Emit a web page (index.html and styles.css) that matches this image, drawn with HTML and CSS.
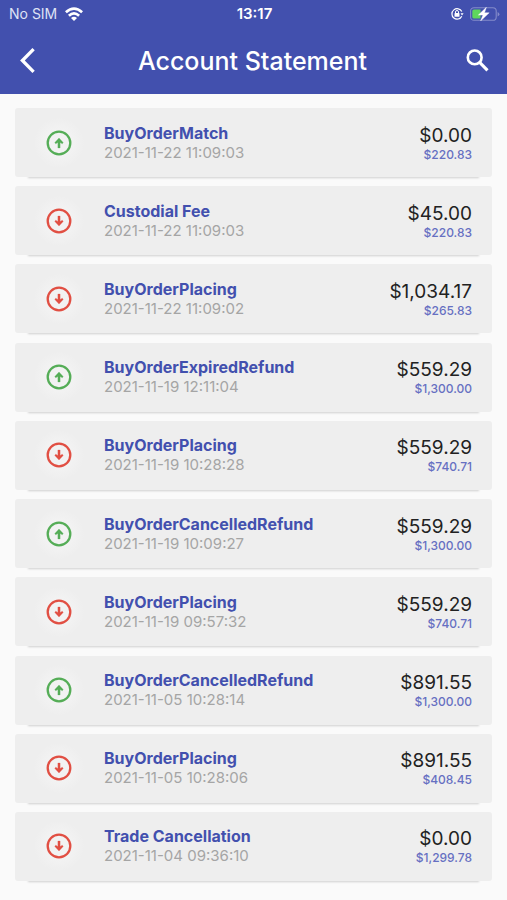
FILE: index.html
```html
<!DOCTYPE html>
<html lang="en">
<head>
<meta charset="utf-8">
<meta name="viewport" content="width=device-width, initial-scale=1">
<title>Account Statement</title>
<link rel="stylesheet" href="styles.css">
</head>
<body>
<svg class="sprite" aria-hidden="true">
  <symbol id="up" viewBox="0 0 26 26"><circle cx="13" cy="13" r="11.3" fill="none" stroke="currentColor" stroke-width="2.3"/><path d="M11.9 17.9v-5.4l-2.2 1.3-.9-1.2L13 8.1l4.2 4.5-.9 1.2-2.2-1.3v5.4z" fill="currentColor" stroke="currentColor" stroke-width=".3"/></symbol>
  <symbol id="down" viewBox="0 0 26 26"><circle cx="13" cy="13" r="11.3" fill="none" stroke="currentColor" stroke-width="2.3"/><path d="M11.9 8.1v5.4l-2.2-1.3-.9 1.2 4.2 4.5 4.2-4.5-.9-1.2-2.2 1.3V8.1z" fill="currentColor" stroke="currentColor" stroke-width=".3"/></symbol>
</svg>
<header class="top">
  <div class="status">
    <div class="carrier">
      <span>No SIM</span>
      <svg class="wifi" viewBox="0 0 18 14" aria-hidden="true"><g fill="none" stroke="currentColor" stroke-width="2.7"><path d="M.9 5.2Q9-2 17.1 5.2"/><path d="M3.9 8.7Q9 4.1 14.1 8.7"/></g><path d="M6 11Q9 8.6 12 11L9 14z" fill="currentColor"/></svg>
    </div>
    <time class="clock">13:17</time>
    <div class="power">
      <svg class="lock" viewBox="0 0 14 14" aria-hidden="true"><path d="M11.8 4.6A5.2 5.2 0 1 0 11.8 9.2" fill="none" stroke="currentColor" stroke-width="1.2"/><path d="M10.5 6.3h3.1L12 8.6z" fill="currentColor"/><rect x="4.5" y="6.1" width="5" height="3.7" rx=".6" fill="currentColor"/><path d="M5.5 6.3V5a1.5 1.5 0 0 1 3 0v1.3" fill="none" stroke="currentColor"/></svg>
      <svg class="battery" viewBox="0 0 30 14" aria-hidden="true"><rect x=".6" y=".7" width="25.6" height="12.6" rx="3.4" fill="none" stroke="#848bca" stroke-width="1.1"/><path d="M27.6 5v4.5q1.8-.6 1.8-2.2T27.6 5z" fill="#848bca"/><path d="M4 2.4h6.5v9.2H4a1.7 1.7 0 0 1-1.7-1.7V4.1A1.7 1.7 0 0 1 4 2.4z" fill="#5fd65d"/><path d="M16.4.2 8.3 8.1h4.6l-2.3 5.8L19.2 5.8h-4.7z" fill="#fff" stroke="#fff" stroke-width=".4"/></svg>
    </div>
  </div>
  <div class="bar">
    <button class="tool" type="button" aria-label="Back"><svg viewBox="0 0 26 26" aria-hidden="true"><path d="M19.6 1.2 8.4 12.5l11.2 11.3" fill="none" stroke="currentColor" stroke-width="3.3"/></svg></button>
    <h1>Account Statement</h1>
    <button class="tool" type="button" aria-label="Search"><svg viewBox="0 0 26 26" aria-hidden="true"><circle cx="9.7" cy="9.4" r="6.9" fill="none" stroke="currentColor" stroke-width="2.6"/><path d="m14.4 14.2 8.1 8.1" fill="none" stroke="currentColor" stroke-width="3.1"/></svg></button>
  </div>
</header>
<main>
  <ul class="list">
    <li class="card"><span class="badge in"><svg aria-hidden="true"><use href="#up"/></svg></span><div class="info"><h2>BuyOrderMatch</h2><time>2021-11-22 11:09:03</time></div><div class="sums"><span class="amount">$0.00</span><span class="balance">$220.83</span></div></li>
    <li class="card"><span class="badge out"><svg aria-hidden="true"><use href="#down"/></svg></span><div class="info"><h2>Custodial Fee</h2><time>2021-11-22 11:09:03</time></div><div class="sums"><span class="amount">$45.00</span><span class="balance">$220.83</span></div></li>
    <li class="card"><span class="badge out"><svg aria-hidden="true"><use href="#down"/></svg></span><div class="info"><h2>BuyOrderPlacing</h2><time>2021-11-22 11:09:02</time></div><div class="sums"><span class="amount">$1,034.17</span><span class="balance">$265.83</span></div></li>
    <li class="card"><span class="badge in"><svg aria-hidden="true"><use href="#up"/></svg></span><div class="info"><h2>BuyOrderExpiredRefund</h2><time>2021-11-19 12:11:04</time></div><div class="sums"><span class="amount">$559.29</span><span class="balance">$1,300.00</span></div></li>
    <li class="card"><span class="badge out"><svg aria-hidden="true"><use href="#down"/></svg></span><div class="info"><h2>BuyOrderPlacing</h2><time>2021-11-19 10:28:28</time></div><div class="sums"><span class="amount">$559.29</span><span class="balance">$740.71</span></div></li>
    <li class="card"><span class="badge in"><svg aria-hidden="true"><use href="#up"/></svg></span><div class="info"><h2>BuyOrderCancelledRefund</h2><time>2021-11-19 10:09:27</time></div><div class="sums"><span class="amount">$559.29</span><span class="balance">$1,300.00</span></div></li>
    <li class="card"><span class="badge out"><svg aria-hidden="true"><use href="#down"/></svg></span><div class="info"><h2>BuyOrderPlacing</h2><time>2021-11-19 09:57:32</time></div><div class="sums"><span class="amount">$559.29</span><span class="balance">$740.71</span></div></li>
    <li class="card"><span class="badge in"><svg aria-hidden="true"><use href="#up"/></svg></span><div class="info"><h2>BuyOrderCancelledRefund</h2><time>2021-11-05 10:28:14</time></div><div class="sums"><span class="amount">$891.55</span><span class="balance">$1,300.00</span></div></li>
    <li class="card"><span class="badge out"><svg aria-hidden="true"><use href="#down"/></svg></span><div class="info"><h2>BuyOrderPlacing</h2><time>2021-11-05 10:28:06</time></div><div class="sums"><span class="amount">$891.55</span><span class="balance">$408.45</span></div></li>
    <li class="card"><span class="badge out"><svg aria-hidden="true"><use href="#down"/></svg></span><div class="info"><h2>Trade Cancellation</h2><time>2021-11-04 09:36:10</time></div><div class="sums"><span class="amount">$0.00</span><span class="balance">$1,299.78</span></div></li>
  </ul>
</main>
</body>
</html>
```
FILE: styles.css
```css
* { box-sizing: border-box; }
body {
  display: flex;
  flex-direction: column;
  min-height: 100vh;
  margin: 0;
  background: #fafafa;
  font-family: Inter, "Liberation Sans", sans-serif;
}
h1, h2 { margin: 0; }
svg { display: block; }
.sprite { position: absolute; width: 0; height: 0; }

.top { background: #4250ae; color: #fff; }
.status {
  display: grid;
  grid-template-columns: 1fr auto 1fr;
  align-items: center;
  height: 27px;
  padding: 0 7px 0 9px;
  font-size: 14px;
}
.carrier, .power { display: flex; align-items: center; gap: 6px; }
.carrier { gap: 8px; color: #dfe2f5; }
.power { justify-content: flex-end; }
.clock { font-size: 15px; font-weight: 600; }
.wifi { width: 18px; height: 14px; color: #fff; }
.lock { width: 14px; height: 14px; }
.battery { width: 30px; height: 14px; }
.bar {
  display: flex;
  align-items: center;
  justify-content: space-between;
  height: 67px;
  padding: 0 16px 0 14px;
}
.bar h1 { font-size: 25px; line-height: 30px; font-weight: 500; }
.tool { padding: 0; border: 0; background: none; color: inherit; }
.tool svg { width: 26px; height: 26px; }

main { display: flex; flex: 1; }
.list {
  display: flex;
  flex: 1;
  flex-direction: column;
  justify-content: space-between;
  gap: 9px;
  margin: 0;
  padding: 14px 15px 19px;
  list-style: none;
}
.card {
  display: flex;
  align-items: center;
  height: 69px;
  padding: 0 20px 0 19px;
  border-radius: 3px;
  background: #eee;
  box-shadow: 0 14px 2px -13px #cfcfcf;
}
.badge {
  display: grid;
  place-items: center;
  width: 50px;
  height: 50px;
  margin-right: 20px;
  border-radius: 50%;
  background: radial-gradient(circle, #f2f2f2 40%, #eee 72%);
}
.badge svg { width: 26px; height: 26px; }
.in { color: #55ad57; }
.out { color: #e14f43; }
.info { flex: 1; }
.info h2 { color: #4250ae; font-size: 16px; line-height: 19px; font-weight: 700; }
.info time { display: block; color: #a5a5a5; font-size: 15px; line-height: 19px; }
.sums { display: flex; flex-direction: column; align-items: flex-end; padding-top: 2px; }
.amount { color: #222; font-size: 19px; line-height: 22px; }
.balance { color: #6670c2; font-size: 12px; line-height: 16px; font-weight: 500; }
```
